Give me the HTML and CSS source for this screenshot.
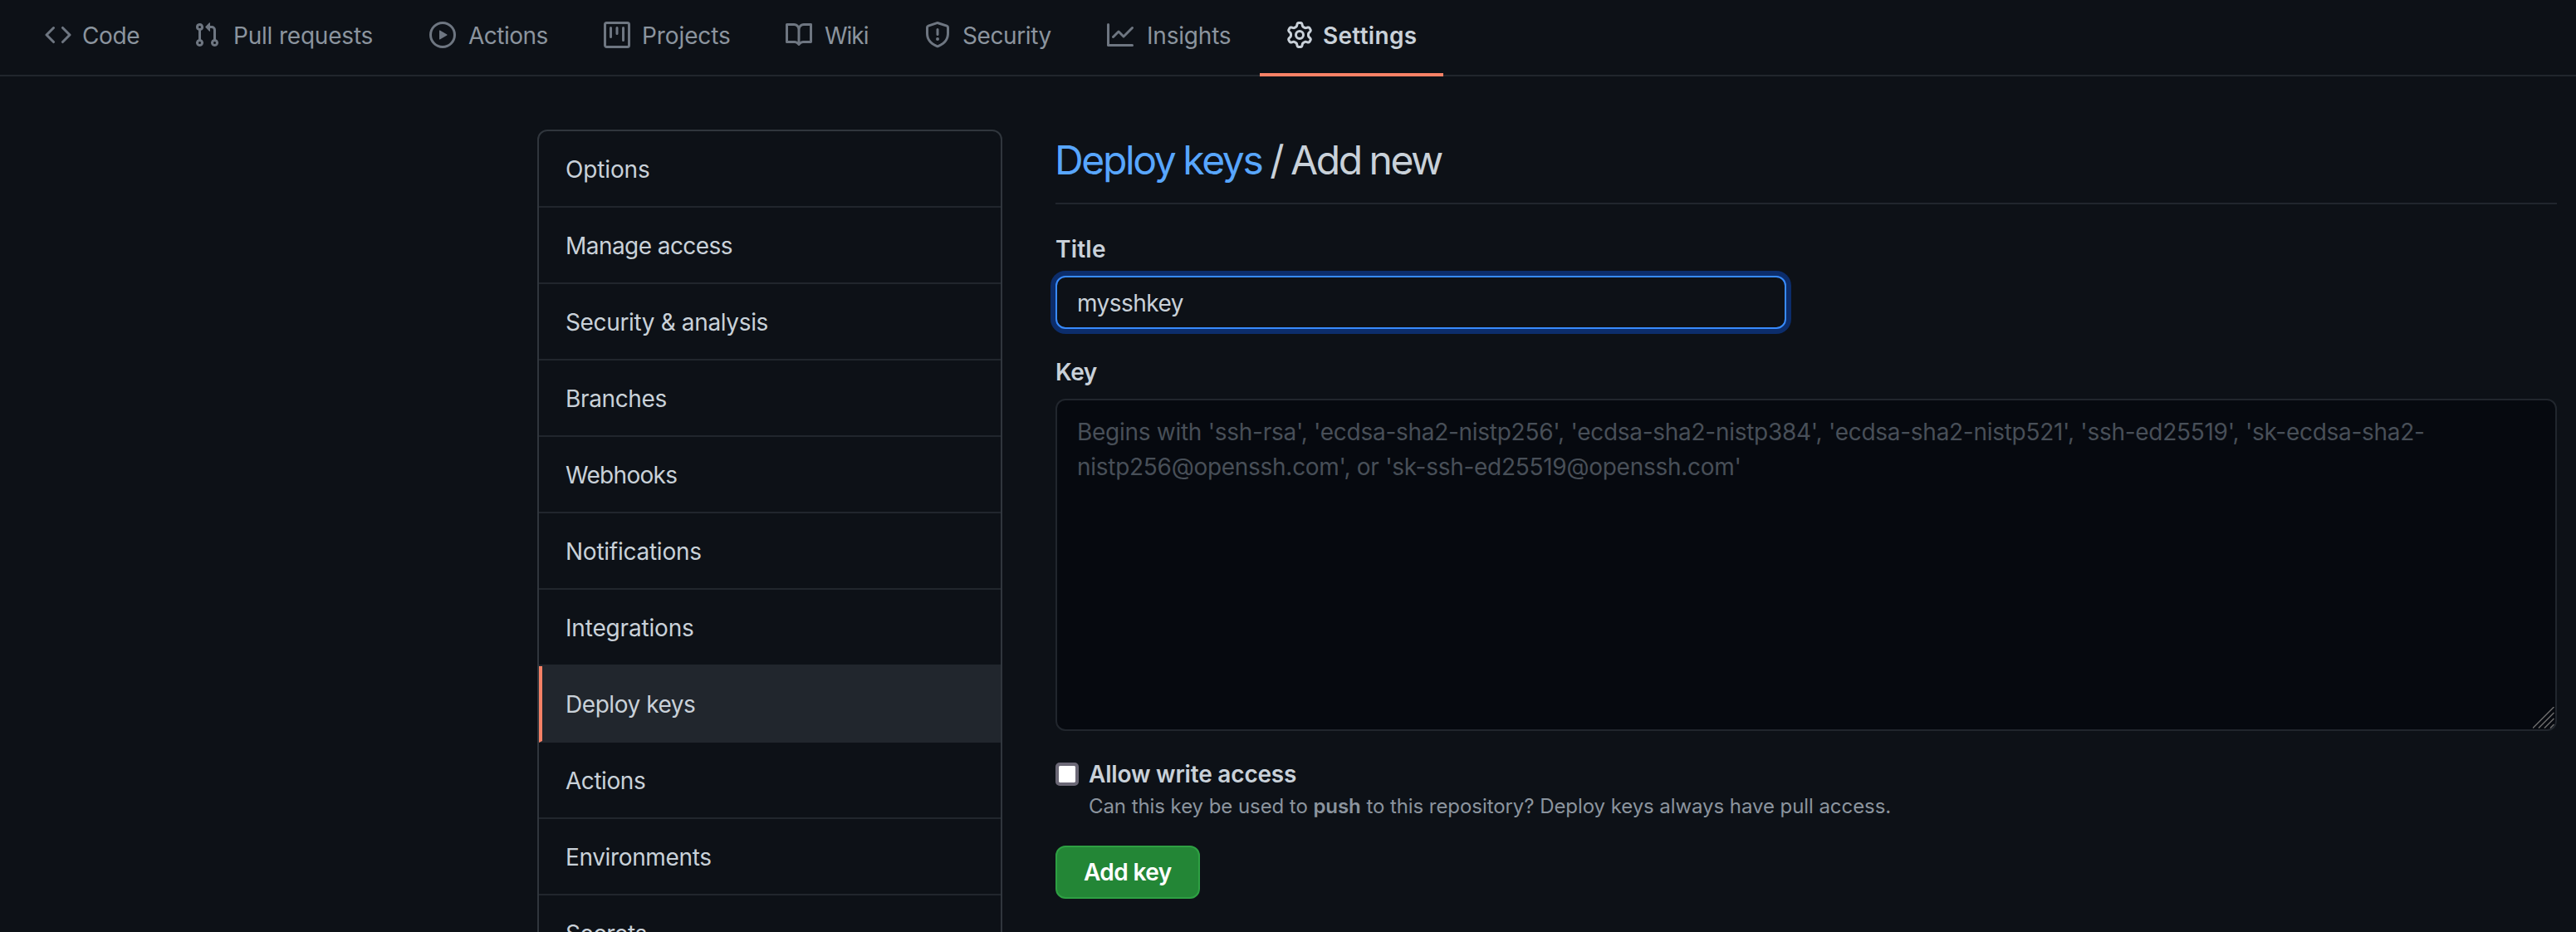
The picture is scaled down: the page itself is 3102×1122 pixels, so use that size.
FILE: index.html
```html
<!DOCTYPE html>
<html lang="en">
<head>
<meta charset="utf-8">
<title>Deploy keys / Add new</title>
<link rel="stylesheet" href="styles.css">
</head>
<body>
<nav class="repo-nav">
  <a class="tab tab-code"><svg class="icon" viewBox="0 0 16 16"><path fill-rule="evenodd" d="M4.72 3.22a.75.75 0 011.06 1.06L2.06 8l3.72 3.72a.75.75 0 11-1.06 1.06L.47 8.53a.75.75 0 010-1.06l4.25-4.25zm6.56 0a.75.75 0 10-1.06 1.06L13.94 8l-3.72 3.72a.75.75 0 101.06 1.06l4.25-4.25a.75.75 0 000-1.06l-4.25-4.25z"/></svg><span>Code</span></a>
  <a class="tab tab-pulls"><svg class="icon" viewBox="0 0 16 16"><path fill-rule="evenodd" d="M7.177 3.073L9.573.677A.25.25 0 0110 .854v4.792a.25.25 0 01-.427.177L7.177 3.427a.25.25 0 010-.354zM3.75 2.5a.75.75 0 100 1.5.75.75 0 000-1.5zm-2.25.75a2.25 2.25 0 113 2.122v5.256a2.251 2.251 0 11-1.5 0V5.372A2.25 2.25 0 011.5 3.25zM11 2.5h-1V4h1a1 1 0 011 1v5.628a2.251 2.251 0 101.5 0V5A2.5 2.5 0 0011 2.5zm1 10.25a.75.75 0 111.5 0 .75.75 0 01-1.5 0zM3.75 12a.75.75 0 100 1.5.75.75 0 000-1.5z"/></svg><span>Pull requests</span></a>
  <a class="tab tab-actions"><svg class="icon" viewBox="0 0 16 16"><path fill-rule="evenodd" d="M1.5 8a6.5 6.5 0 1113 0 6.5 6.5 0 01-13 0zM8 0a8 8 0 100 16A8 8 0 008 0zM6.379 5.227A.25.25 0 006 5.442v5.117a.25.25 0 00.379.214l4.264-2.559a.25.25 0 000-.428L6.379 5.227z"/></svg><span>Actions</span></a>
  <a class="tab tab-projects"><svg class="icon" viewBox="0 0 16 16"><path fill-rule="evenodd" d="M1.75 0A1.75 1.75 0 000 1.75v12.5C0 15.216.784 16 1.75 16h12.5A1.75 1.75 0 0016 14.25V1.75A1.75 1.75 0 0014.25 0H1.75zM1.5 1.75a.25.25 0 01.25-.25h12.5a.25.25 0 01.25.25v12.5a.25.25 0 01-.25.25H1.75a.25.25 0 01-.25-.25V1.75zM11.75 3a.75.75 0 00-.75.75v7.5a.75.75 0 001.5 0v-7.5a.75.75 0 00-.75-.75zm-8.25.75a.75.75 0 011.5 0v5.5a.75.75 0 01-1.5 0v-5.5zM8 3a.75.75 0 00-.75.75v3.5a.75.75 0 001.5 0v-3.5A.75.75 0 008 3z"/></svg><span>Projects</span></a>
  <a class="tab tab-wiki"><svg class="icon" viewBox="0 0 16 16"><path fill-rule="evenodd" d="M0 1.75A.75.75 0 01.75 1h4.253c1.227 0 2.317.59 3 1.501A3.744 3.744 0 0111.006 1h4.245a.75.75 0 01.75.75v10.5a.75.75 0 01-.75.75h-4.507a2.25 2.25 0 00-1.591.659l-.622.621a.75.75 0 01-1.06 0l-.622-.621A2.25 2.25 0 005.258 13H.75a.75.75 0 01-.75-.75V1.75zm8.755 3a2.25 2.25 0 012.25-2.25H14.5v9h-3.757c-.71 0-1.4.201-1.992.572l.004-7.322zm-1.504 7.324l.004-5.073-.002-2.253A2.25 2.25 0 005.003 2.5H1.5v9h3.757a3.75 3.75 0 011.994.574z"/></svg><span>Wiki</span></a>
  <a class="tab tab-security"><svg class="icon" viewBox="0 0 16 16"><path fill-rule="evenodd" d="M7.467.133a1.75 1.75 0 011.066 0l5.25 1.68A1.75 1.75 0 0115 3.48V7c0 1.566-.32 3.182-1.303 4.682-.983 1.498-2.585 2.813-5.032 3.855a1.7 1.7 0 01-1.33 0c-2.447-1.042-4.049-2.357-5.032-3.855C1.32 10.182 1 8.566 1 7V3.48a1.75 1.75 0 011.217-1.667l5.25-1.68zm.61 1.429a.25.25 0 00-.153 0l-5.25 1.68a.25.25 0 00-.174.238V7c0 1.358.275 2.666 1.057 3.86.784 1.194 2.121 2.34 4.366 3.297a.2.2 0 00.154 0c2.245-.956 3.582-2.104 4.366-3.298C13.225 9.666 13.5 8.36 13.5 7V3.48a.25.25 0 00-.174-.237l-5.25-1.68zM9 10.5a1 1 0 11-2 0 1 1 0 012 0zm-.25-5.75a.75.75 0 10-1.5 0v3a.75.75 0 001.5 0v-3z"/></svg><span>Security</span></a>
  <a class="tab tab-insights"><svg class="icon" viewBox="0 0 16 16"><path fill-rule="evenodd" d="M1.5 1.75a.75.75 0 00-1.5 0v12.5c0 .414.336.75.75.75h14.5a.75.75 0 000-1.5H1.5V1.75zm14.28 2.53a.75.75 0 00-1.06-1.06L10 7.94 7.53 5.47a.75.75 0 00-1.06 0L3.22 8.72a.75.75 0 001.06 1.06L7 7.06l2.47 2.47a.75.75 0 001.06 0l5.25-5.25z"/></svg><span>Insights</span></a>
  <a class="tab tab-settings selected"><svg class="icon" viewBox="0 0 16 16"><path fill-rule="evenodd" d="M7.429 1.525a6.593 6.593 0 011.142 0c.036.003.108.036.137.146l.289 1.105c.147.56.55.967.997 1.189.174.086.341.183.501.29.417.278.97.423 1.53.27l1.102-.303c.11-.03.175.016.195.046.219.31.41.641.573.989.014.031.022.11-.059.19l-.815.806c-.411.406-.562.957-.53 1.456a4.588 4.588 0 010 .582c-.032.499.119 1.05.53 1.456l.815.806c.08.08.073.159.059.19a6.494 6.494 0 01-.573.99c-.02.029-.086.074-.195.045l-1.103-.303c-.559-.153-1.112-.008-1.529.27-.16.107-.327.204-.5.29-.449.222-.851.628-.998 1.189l-.289 1.105c-.029.11-.101.143-.137.146a6.613 6.613 0 01-1.142 0c-.036-.003-.108-.037-.137-.146l-.289-1.105c-.147-.56-.55-.967-.997-1.189a4.502 4.502 0 01-.501-.29c-.417-.278-.97-.423-1.53-.27l-1.102.303c-.11.03-.175-.016-.195-.046a6.492 6.492 0 01-.573-.989c-.014-.031-.022-.11.059-.19l.815-.806c.411-.406.562-.957.53-1.456a4.587 4.587 0 010-.582c.032-.499-.119-1.05-.53-1.456l-.815-.806c-.08-.08-.073-.159-.059-.19a6.44 6.44 0 01.573-.99c.02-.029.086-.075.195-.045l1.103.303c.559.153 1.112.008 1.529-.27.16-.107.327-.204.5-.29.449-.222.851-.628.998-1.189l.289-1.105c.029-.11.101-.143.137-.146zM8 0c-.236 0-.47.01-.701.03-.743.065-1.29.615-1.458 1.261l-.29 1.106c-.017.066-.078.158-.211.224a5.994 5.994 0 00-.668.386c-.123.082-.233.09-.3.071L3.27 2.776c-.644-.177-1.392.02-1.82.63a7.977 7.977 0 00-.704 1.217c-.315.675-.111 1.422.363 1.891l.815.806c.05.048.098.147.088.294a6.084 6.084 0 000 .772c.01.147-.038.246-.088.294l-.815.806c-.474.469-.678 1.216-.363 1.891.2.428.436.835.704 1.218.428.609 1.176.806 1.82.63l1.103-.303c.066-.019.176-.011.299.071.213.143.436.272.668.386.133.066.194.158.212.224l.289 1.106c.169.646.715 1.196 1.458 1.26a8.094 8.094 0 001.402 0c.743-.064 1.29-.614 1.458-1.26l.29-1.106c.017-.066.078-.158.211-.224a5.98 5.98 0 00.668-.386c.123-.082.233-.09.3-.071l1.102.302c.644.177 1.392-.02 1.82-.63.268-.382.505-.789.704-1.217.315-.675.111-1.422-.364-1.891l-.814-.806c-.05-.048-.098-.147-.088-.294a6.1 6.1 0 000-.772c-.01-.147.039-.246.088-.294l.814-.806c.475-.469.679-1.216.364-1.891a7.992 7.992 0 00-.704-1.218c-.428-.609-1.176-.806-1.82-.63l-1.103.303c-.066.019-.176.011-.299-.071a5.991 5.991 0 00-.668-.386c-.133-.066-.194-.158-.212-.224L10.16 1.29C9.99.645 9.444.095 8.701.031A8.094 8.094 0 008 0zm1.5 8a1.5 1.5 0 11-3 0 1.5 1.5 0 013 0zM11 8a3 3 0 11-6 0 3 3 0 016 0z"/></svg><span>Settings</span></a>
</nav>
<div class="layout">
  <aside class="menu">
    <a class="menu-item menu-options">Options</a>
    <a class="menu-item menu-access">Manage access</a>
    <a class="menu-item">Security &amp; analysis</a>
    <a class="menu-item">Branches</a>
    <a class="menu-item menu-webhooks">Webhooks</a>
    <a class="menu-item menu-notifications">Notifications</a>
    <a class="menu-item menu-integrations">Integrations</a>
    <a class="menu-item current">Deploy keys</a>
    <a class="menu-item menu-actions">Actions</a>
    <a class="menu-item">Environments</a>
    <a class="menu-item">Secrets</a>
  </aside>
  <main class="content">
    <h1 class="heading"><a class="heading-link">Deploy keys</a> / Add new</h1>
    <form>
      <label class="field-label title-label" for="title">Title</label>
      <input class="title-input" id="title" type="text" value="mysshkey" spellcheck="false">
      <label class="field-label key-label" for="key">Key</label>
      <div class="key-field">
        <textarea class="key-input" id="key" placeholder="Begins with 'ssh-rsa', 'ecdsa-sha2-nistp256', 'ecdsa-sha2-nistp384', 'ecdsa-sha2-nistp521', 'ssh-ed25519', 'sk-ecdsa-sha2-nistp256@openssh.com', or 'sk-ssh-ed25519@openssh.com'"></textarea>
        <svg class="grip" viewBox="0 0 26 26"><path d="M0 25.5L25.5 0M7 25.5L25.5 7M14 25.5L25.5 14M21 25.5L25.5 21"/></svg>
      </div>
      <div class="write-access">
        <span class="checkbox" role="checkbox" aria-checked="false"></span>
        <div>
          <div class="check-label">Allow write access</div>
          <p class="note">Can this key be used to <strong>push</strong> to this repository? Deploy keys always have pull access.</p>
        </div>
      </div>
      <button class="submit" type="button">Add key</button>
    </form>
  </main>
</div>
</body>
</html>
```
FILE: styles.css
```css
* {
  box-sizing: border-box;
}

body {
  margin: 0;
  height: 1122px;
  overflow: hidden;
  background: #0d1117;
  color: #c9d1d9;
  font-family: Inter, "Liberation Sans", sans-serif;
  font-size: 28px;
}

/* Repository navigation */
.repo-nav {
  display: grid;
  grid-template-columns: 179px 284px 210px 219px 167px 220px 216px 221px;
  height: 92px;
  padding-left: 22px;
  border-bottom: 2px solid #21262d;
}

.tab {
  display: flex;
  align-items: flex-start;
  gap: 14px;
  height: 92px;
  padding-left: 32px;
  color: #8b949e;
  line-height: 86px;
  white-space: nowrap;
}

.icon {
  flex: none;
  width: 32px;
  height: 32px;
  margin-top: 26px;
  fill: #6e7681;
}

.tab-code { gap: 13px; letter-spacing: -.4px; }
.tab-pulls { gap: 16px; letter-spacing: -.2px; }
.tab-actions { gap: 15px; letter-spacing: -.5px; }
.tab-projects { letter-spacing: -.1px; }
.tab-wiki { gap: 15px; letter-spacing: -1px; }
.tab-security { letter-spacing: -.4px; }
.tab-insights { gap: 16px; letter-spacing: -.2px; }
.tab-settings { gap: 12px; letter-spacing: .3px; }

.selected {
  border-bottom: 4px solid #f78166;
  color: #c9d1d9;
  font-weight: 600;
}

.selected .icon {
  fill: #c9d1d9;
}

/* Page body */
.layout {
  display: grid;
  grid-template-columns: 560px 1808px;
  column-gap: 64px;
  align-items: start;
  padding: 64px 0 0 647px;
}

.menu {
  overflow: hidden;
  border: 2px solid #30363d;
  border-radius: 12px;
}

.menu-item {
  display: block;
  height: 92px;
  padding-left: 32px;
  border-bottom: 2px solid #21262d;
  line-height: 92px;
  letter-spacing: -.36px;
}

.menu-options { letter-spacing: -.15px; }
.menu-access { letter-spacing: -.56px; }
.menu-webhooks { letter-spacing: -.7px; }
.menu-notifications { letter-spacing: -.25px; }
.menu-integrations { letter-spacing: -.18px; }
.menu-actions { letter-spacing: -.45px; }

.current {
  padding-left: 28px;
  border-left: 4px solid #f78166;
  background: #21262d;
  letter-spacing: -.45px;
}

.heading {
  height: 90px;
  margin: 0 0 33px;
  border-bottom: 2px solid #21262d;
  font-size: 48px;
  font-weight: 400;
  line-height: 73px;
  letter-spacing: -2.4px;
  word-spacing: -1.3px;
  text-indent: -1px;
}

.heading-link {
  color: #58a6ff;
  letter-spacing: -2.35px;
}

.field-label {
  display: block;
  margin-bottom: 11px;
  font-weight: 600;
  line-height: 42px;
}

.title-label { letter-spacing: .2px; }
.key-label { letter-spacing: -.4px; }

.title-input {
  display: block;
  width: 880px;
  height: 64px;
  margin: 0 0 31px;
  padding: 2px 24px 0;
  border: 2px solid #388bfd;
  border-radius: 12px;
  outline: none;
  background: #0d1117;
  box-shadow: 0 0 0 6px #0c2d6b;
  color: #c9d1d9;
  font: inherit;
  letter-spacing: -.55px;
}

.key-field {
  position: relative;
}

.key-input {
  display: block;
  width: 100%;
  height: 400px;
  margin: 0;
  padding: 17px 24px;
  border: 2px solid #21262d;
  border-radius: 12px;
  outline: none;
  resize: none;
  background: #06090f;
  font: inherit;
  line-height: 42px;
  letter-spacing: -.28px;
}

.key-input::placeholder {
  color: #484f58;
  opacity: 1;
}

.grip {
  position: absolute;
  right: 3px;
  bottom: 3px;
  width: 26px;
  height: 26px;
  fill: none;
  stroke: #6b6b6b;
  stroke-width: 1.5;
}

.write-access {
  display: flex;
  gap: 12px;
  margin-top: 31px;
}

.checkbox {
  flex: none;
  width: 28px;
  height: 28px;
  margin-top: 7px;
  border: 4px solid #6b6876;
  border-radius: 5px;
  background: linear-gradient(#fff, #fff) padding-box;
}

.check-label {
  font-weight: 600;
  line-height: 42px;
  letter-spacing: -.19px;
}

.note {
  margin: 0;
  color: #8b949e;
  font-size: 24px;
  line-height: 35px;
  letter-spacing: -.07px;
}

.note strong {
  font-weight: 600;
}

.submit {
  display: block;
  width: 174px;
  height: 64px;
  margin-top: 30px;
  padding: 0 0 0 32px;
  border: 2px solid #2ea043;
  border-radius: 12px;
  background: #238636;
  color: #fff;
  font: inherit;
  font-weight: 600;
  letter-spacing: -.6px;
  text-align: left;
}
```
